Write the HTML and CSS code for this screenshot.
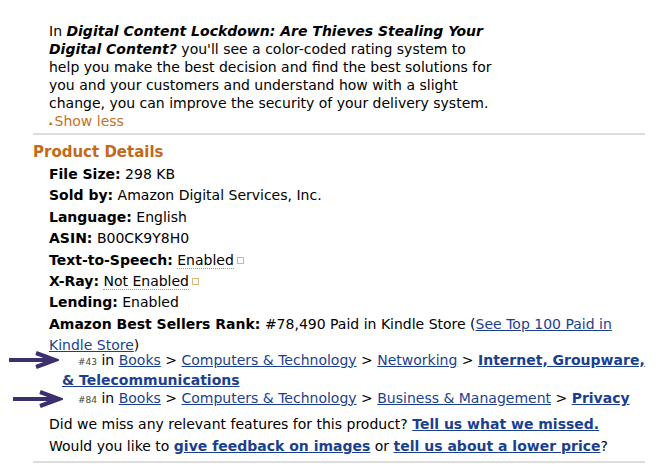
FILE: index.html
```html
<!DOCTYPE html>
<html lang="en">
<head>
  <meta charset="UTF-8">
  <title>Product Details</title>
  <link rel="stylesheet" href="styles.css">
</head>
<body>

  <div class="desc">
    In <b><i>Digital Content Lockdown: Are Thieves Stealing Your Digital Content?</i></b> you'll see a color-coded rating system to help you make the best decision and find the best solutions for you and your customers and understand how with a slight change, you can improve the security of your delivery system.
    <div class="show-less"><span class="up">&#x25B4;</span>Show less</div>
  </div>

  <hr class="rule">

  <h2 class="title">Product Details</h2>

  <ul class="details">
    <li><b>File Size:</b> 298 KB</li>
    <li><b>Sold by:</b> Amazon Digital Services, Inc.</li>
    <li><b>Language:</b> English</li>
    <li><b>ASIN:</b> B00CK9Y8H0</li>
    <li><b>Text-to-Speech:</b> <span class="dotted">Enabled</span><span class="pop"></span></li>
    <li><b>X-Ray:</b> <span class="dotted">Not Enabled</span><span class="pop"></span></li>
    <li><b>Lending:</b> Enabled</li>
    <li class="rank">
      <b>Amazon Best Sellers Rank:</b> #78,490 Paid in Kindle Store (<a href="#">See Top 100 Paid in Kindle Store</a>)
      <div class="sub first">
        <span class="arrow a1"><svg width="50" height="18" viewBox="0 0 50 18"><path d="M0 9H45M27 2L46 9L27 16" fill="none" stroke="#3b2f6e" stroke-width="4"/></svg></span>
        <span class="num">#43</span> in <a href="#">Books</a> &gt; <a href="#">Computers &amp; Technology</a> &gt; <a href="#">Networking</a> &gt; <a href="#" class="strong">Internet, Groupware, &amp; Telecommunications</a>
      </div>
      <div class="sub">
        <span class="arrow a2"><svg width="50" height="18" viewBox="0 0 50 18"><path d="M0 9H45M27 2L46 9L27 16" fill="none" stroke="#3b2f6e" stroke-width="4"/></svg></span>
        <span class="num">#84</span> in <a href="#">Books</a> &gt; <a href="#">Computers &amp; Technology</a> &gt; <a href="#">Business &amp; Management</a> &gt; <a href="#" class="strong">Privacy</a>
      </div>
    </li>
  </ul>

  <div class="feedback">
    <div>Did we miss any relevant features for this product? <a href="#" class="strong">Tell us what we missed.</a></div>
    <div>Would you like to <a href="#" class="strong">give feedback on images</a> or <a href="#" class="strong">tell us about a lower price</a>?</div>
  </div>

  <hr class="rule bottom">

</body>
</html>
```

FILE: styles.css
```css
body {
  font-family: "DejaVu Sans", Verdana, sans-serif;
  font-size: 14px;
  color: #000;
  background: white;
  margin: 0;
  padding: 22px 23px 0 33px;
}

a {
  color: #1b3f8f;
}

.strong {
  font-weight: bold;
}

.desc {
  padding-left: 16px;
  width: 450px;
  line-height: 18px;
}

.show-less {
  color: #c4721f;
  height: 18px;
}

.up {
  font-size: 7px;
  margin-right: 2px;
  vertical-align: 1px;
}

.rule {
  border: none;
  border-top: 2px solid #ddd;
  margin: 3px 0 0;
}

.title {
  color: #c4691a;
  font-size: 15px;
  margin: 7px 0 2px;
  line-height: 20px;
}

.details {
  list-style: none;
  margin: 0;
  padding: 0 0 0 16px;
}

.details li {
  line-height: 21.4px;
}

.dotted {
  border-bottom: 1px dotted #999;
}

.pop {
  display: inline-block;
  width: 5px;
  height: 5px;
  border: 1px solid #d7b77a;
  margin-left: 3px;
  vertical-align: 1px;
}

.rank .sub {
  line-height: 18px;
  padding-left: 13px;
  text-indent: 16px;
  position: relative;
}

.rank .first {
  margin-top: -6px;
}

.num {
  font-size: 9px;
  color: #444;
}

.arrow {
  position: absolute;
  top: 0;
  line-height: 0;
  text-indent: 0;
}

.a1 {
  left: -40px;
}

.a2 {
  left: -36px;
  top: 1px;
}

.feedback {
  padding: 4px 0 0 16px;
}

.feedback div {
  line-height: 22px;
}

.bottom {
  margin-top: 4px;
}
```
